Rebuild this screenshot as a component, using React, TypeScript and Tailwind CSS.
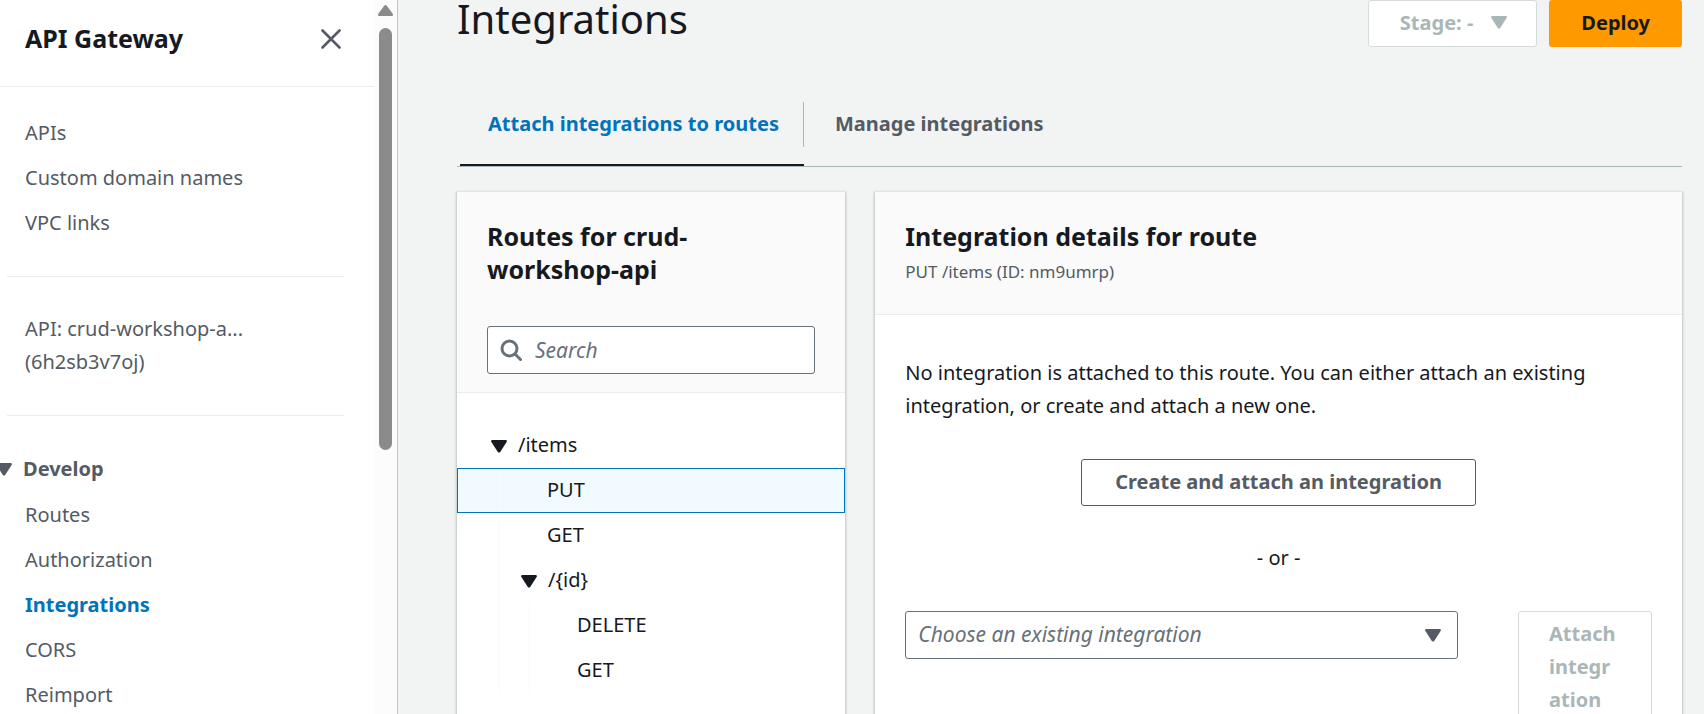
import React from "react";

function Caret({ className = "" }: { className?: string }) {
  return (
    <svg viewBox="0 0 16 13" className={"h-[13px] w-4 shrink-0 " + className} fill="currentColor" aria-hidden="true">
      <path d="M1.6 0h12.8c1.3 0 1.9 1 1.2 2L9.2 11.9c-.6.9-1.8.9-2.4 0L.4 2C-.3 1 .3 0 1.6 0z" />
    </svg>
  );
}

const topLinks = ["APIs", "Custom domain names", "VPC links"];
const developLinks = ["Routes", "Authorization", "Integrations", "CORS", "Reimport"];

function NavLink({ label }: { label: string }) {
  const active = label === "Integrations";
  return (
    <li>
      <a href="#" aria-current={active ? "page" : undefined} className={active ? "font-bold text-[#0073bb]" : "text-[#545b64]"}>
        {label}
      </a>
    </li>
  );
}

function Sidebar() {
  return (
    <aside className="flex w-[398px] shrink-0 border-r border-[#c0c6c8] bg-white">
      <div className="min-w-0 flex-1">
        <div className="flex h-[87px] items-start justify-between border-b border-[#eaeded] pt-[22px] pr-[33px] pl-[25px]">
          <h2 className="text-[25px] font-bold">API Gateway</h2>
          <button type="button" aria-label="Close navigation" className="mt-[7px] text-[#545b64]">
            <svg viewBox="0 0 20 20" className="size-5" fill="none" stroke="currentColor" strokeWidth="2.6" strokeLinecap="round" aria-hidden="true">
              <path d="M1.5 1.5l17 17M18.5 1.5l-17 17" />
            </svg>
          </button>
        </div>
        <nav aria-label="API Gateway" className="pt-[29px]">
          <ul className="flex flex-col gap-3 pl-[25px]">
            {topLinks.map((l) => (
              <NavLink key={l} label={l} />
            ))}
          </ul>
          <hr className="mt-[37px] mr-[30px] ml-[7px] border-[#eaeded]" />
          <p className="mt-[35px] pl-[25px] text-[#545b64]">
            API: crud-workshop-a...
            <br />
            (6h2sb3v7oj)
          </p>
          <hr className="mt-[37px] mr-[30px] ml-[7px] border-[#eaeded]" />
          <button type="button" aria-expanded="true" className="mt-9 -ml-1 flex items-center gap-[11px] font-bold text-[#545b64]">
            <Caret className="mt-[2px]" />
            Develop
          </button>
          <ul className="mt-[13px] flex flex-col gap-3 pl-[25px]">
            {developLinks.map((l) => (
              <NavLink key={l} label={l} />
            ))}
          </ul>
        </nav>
      </div>
      <div className="flex w-[23px] shrink-0 flex-col items-center gap-3 bg-[#fcfcfc] pt-[5px]" aria-hidden="true">
        <svg viewBox="0 0 15 11" className="h-[11px] w-[15px]" fill="#8b8b8b">
          <path d="M6.2.8c.7-1 1.9-1 2.6 0l5.9 8c.7 1 .2 2.2-1.1 2.2H1.4C.1 11-.4 9.800.3 8.800z" />
        </svg>
        <div className="h-[422px] w-[13px] rounded-full bg-[#8b8b8b]" />
      </div>
    </aside>
  );
}

function RouteRow({ label, selected = false, className }: { label: string; selected?: boolean; className: string }) {
  return (
    <button
      type="button"
      aria-pressed={selected}
      className={"relative flex h-[45px] w-full items-center border pb-[2px] text-left " + (selected ? "border-[#0073bb] bg-[#f1faff] " : "border-transparent ") + className}
    >
      {selected && <span className="absolute inset-y-0 left-[41px] w-px bg-[#f8fcfe]" />}
      {label}
    </button>
  );
}

function RoutesPanel() {
  return (
    <section className="col-span-4 bg-white shadow-[0_1px_2px_1px_#aab7b8c0]">
      <div className="border-b border-[#eaeded] bg-[#fafafa] px-[30px] pt-7 pb-[18px]">
        <h2 className="text-[25px] leading-[33px] font-bold">Routes for crud-workshop-api</h2>
        <label className="mt-10 flex h-12 items-center gap-[13px] rounded-[3px] border border-[#687078] bg-white px-3">
          <svg viewBox="0 0 22 22" className="size-[22px] shrink-0" fill="none" stroke="#687078" strokeWidth="3" aria-hidden="true">
            <circle cx="9.500" cy="9.500" r="7.500" />
            <path d="M14.500 14.500l7 7" />
          </svg>
          <input
            type="text"
            aria-label="Search routes"
            placeholder="Search"
            className="min-w-0 flex-1 bg-transparent text-[21px] outline-none placeholder:text-[#687078] placeholder:italic"
          />
        </label>
      </div>
      <div className="pt-[30px] pb-12">
        <button type="button" aria-expanded="true" className="flex h-[45px] items-center gap-[11px] pb-[2px] pl-[34px]">
          <Caret className="mt-[3px]" />
          /items
        </button>
        <div className="relative">
          <span className="absolute inset-y-0 left-[42px] w-px bg-[#fafafa]" />
          <RouteRow label="PUT" selected className="pl-[89px]" />
          <RouteRow label="GET" className="pl-[89px]" />
          <button type="button" aria-expanded="true" className="flex h-[45px] items-center gap-[11px] pb-[2px] pl-[64px]">
            <Caret className="mt-[3px]" />
            {"/{id}"}
          </button>
          <div className="relative">
            <span className="absolute inset-y-0 left-[72px] w-px bg-[#fafafa]" />
            <RouteRow label="DELETE" className="pl-[119px]" />
            <RouteRow label="GET" className="pl-[119px]" />
          </div>
        </div>
      </div>
    </section>
  );
}

function DetailsPanel() {
  return (
    <section className="col-span-8 bg-white shadow-[0_1px_2px_1px_#aab7b8c0]">
      <div className="border-b border-[#eaeded] bg-[#fafafa] px-[30px] pt-7 pb-[26px]">
        <h2 className="text-[25px] leading-[33px] font-bold">Integration details for route</h2>
        <p className="mt-[2px] text-[17px] text-[#545b64]">PUT /items (ID: nm9umrp)</p>
      </div>
      <div className="flex flex-col px-[30px] pt-[41px]">
        <p>No integration is attached to this route. You can either attach an existing integration, or create and attach a new one.</p>
        <button type="button" className="mt-[37px] h-[47px] self-center rounded-[3px] border border-[#545b64] px-[33px] pb-[2px] font-bold text-[#545b64]">
          Create and attach an integration
        </button>
        <p className="mt-[35px] text-center">- or -</p>
        <div className="mt-[37px] flex items-start gap-[60px]">
          <div className="relative min-w-0 flex-1">
            <select
              aria-label="Existing integration"
              className="h-12 w-full appearance-none rounded-[3px] border border-[#687078] bg-white pr-12 pb-[2px] pl-3 text-[21px] text-[#687078] italic"
            >
              <option>Choose an existing integration</option>
            </select>
            <Caret className="pointer-events-none absolute top-[18px] right-[17px] text-[#545b64]" />
          </div>
          <button type="button" disabled className="w-[134px] rounded-[3px] border border-[#d5dbdb] px-[30px] pt-[5px] pb-[7px] text-left font-bold wrap-anywhere text-[#aab7b8]">
            Attach integration
          </button>
        </div>
      </div>
    </section>
  );
}

export default function App() {
  return (
    <div className="flex h-screen overflow-hidden bg-[#f2f3f3] font-['Noto_Sans','Open_Sans',sans-serif] text-[20px] leading-[33px] text-[#16191f]">
      <Sidebar />
      <main className="min-w-0 flex-1 pr-[22px] pl-[59px]">
        <header className="flex h-[47px] items-start justify-between">
          <h1 className="text-[40px] leading-[38px]">Integrations</h1>
          <div className="flex gap-3">
            <button type="button" disabled className="flex h-[47px] items-center gap-[18px] rounded-[3px] border border-[#d5dbdb] bg-white pr-[29px] pb-[2px] pl-[31px] font-bold text-[#aab7b8]">
              Stage: -
              <Caret />
            </button>
            <button type="button" className="h-[47px] rounded-[3px] bg-[#ff9900] px-[32px] pb-[2px] font-bold">
              Deploy
            </button>
          </div>
        </header>
        <div role="tablist" className="mt-[55px] flex border-b border-[#aab7b8] pl-[3px] font-bold">
          <button type="button" role="tab" aria-selected="true" className="flex flex-col border-b-2 border-[#16191f] pb-[17px] text-[#0073bb]">
            <span className="border-r border-[#aab7b8] pt-[5px] pr-6 pb-[7px] pl-7">Attach integrations to routes</span>
          </button>
          <button type="button" role="tab" aria-selected="false" className="flex flex-col border-b-2 border-transparent px-[31px] pb-[17px] text-[#545b64]">
            <span className="pt-[5px] pb-[7px]">Manage integrations</span>
          </button>
        </div>
        <div className="mt-[25px] grid grid-cols-12 gap-[30px]">
          <RoutesPanel />
          <DetailsPanel />
        </div>
      </main>
    </div>
  );
}
